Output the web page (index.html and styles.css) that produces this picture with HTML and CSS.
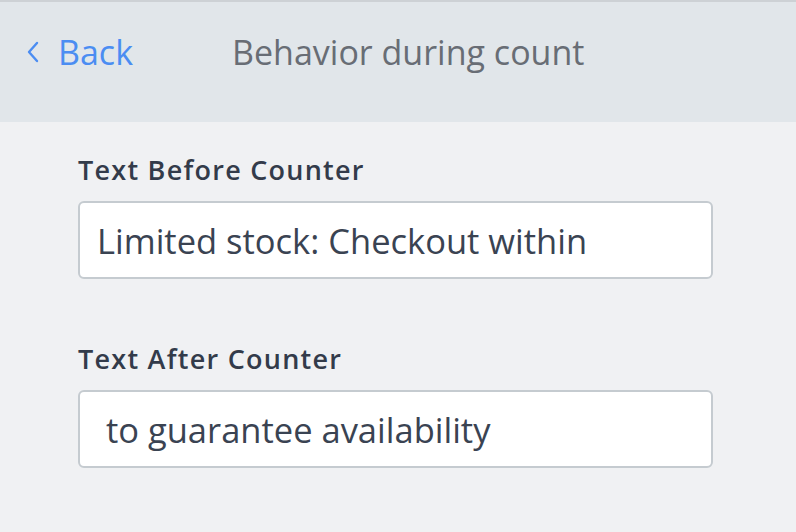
FILE: index.html
```html
<!DOCTYPE html>
<html lang="en">
<head>
<meta charset="utf-8">
<link rel="stylesheet" href="styles.css">
</head>
<body>
<header class="topbar">
  <a class="back" href="#">
    <svg class="chev" width="14" height="22" viewBox="0 0 14 22"><path d="M11 2 L3 11 L11 20" fill="none" stroke="#4b8df2" stroke-width="2.4" stroke-linecap="round" stroke-linejoin="round"/></svg>
    <span class="back-text">Back</span>
  </a>
  <h1 class="title">Behavior during count</h1>
</header>
<main class="panel">
  <div class="field">
    <label class="label">Text Before Counter</label>
    <input class="input" type="text" value="Limited stock: Checkout within">
  </div>
  <div class="field">
    <label class="label">Text After Counter</label>
    <input class="input" type="text" value=" to guarantee availability">
  </div>
</main>
</body>
</html>
```
FILE: styles.css
```css
html, body {
  margin: 0;
  padding: 0;
  background: #f0f1f3;
  font-family: "Open Sans", Lato, sans-serif;
}
.topbar {
  height: 122px;
  border-top: 2px solid #cdd1d5;
  background: #e1e6ea;
  display: flex;
  align-items: center;
  padding-left: 26px;
  padding-bottom: 20px;
  box-sizing: border-box;
}
.back {
  display: flex;
  align-items: center;
  gap: 18px;
  color: #4b8df2;
  text-decoration: none;
  font-size: 34px;
  line-height: 40px;
}
.chev { display: block; }
.title {
  margin: 0 0 0 99px;
  font-size: 34px;
  line-height: 40px;
  font-weight: 400;
  color: #686d75;
}
.panel {
  padding: 32px 0 0 78px;
  display: flex;
  flex-direction: column;
  gap: 64px;
}
.field {
  display: flex;
  flex-direction: column;
  gap: 15px;
}
.label {
  font-size: 27px;
  line-height: 32px;
  font-weight: 600;
  letter-spacing: 1.25px;
  color: #333b4a;
}
.input {
  width: 635px;
  height: 78px;
  box-sizing: border-box;
  border: 2px solid #c5cbd0;
  border-radius: 6px;
  background: #fff;
  padding: 0 17px;
  font-family: "Open Sans", Lato, sans-serif;
  font-size: 34.5px;
  color: #3a4352;
  outline: none;
}
```
